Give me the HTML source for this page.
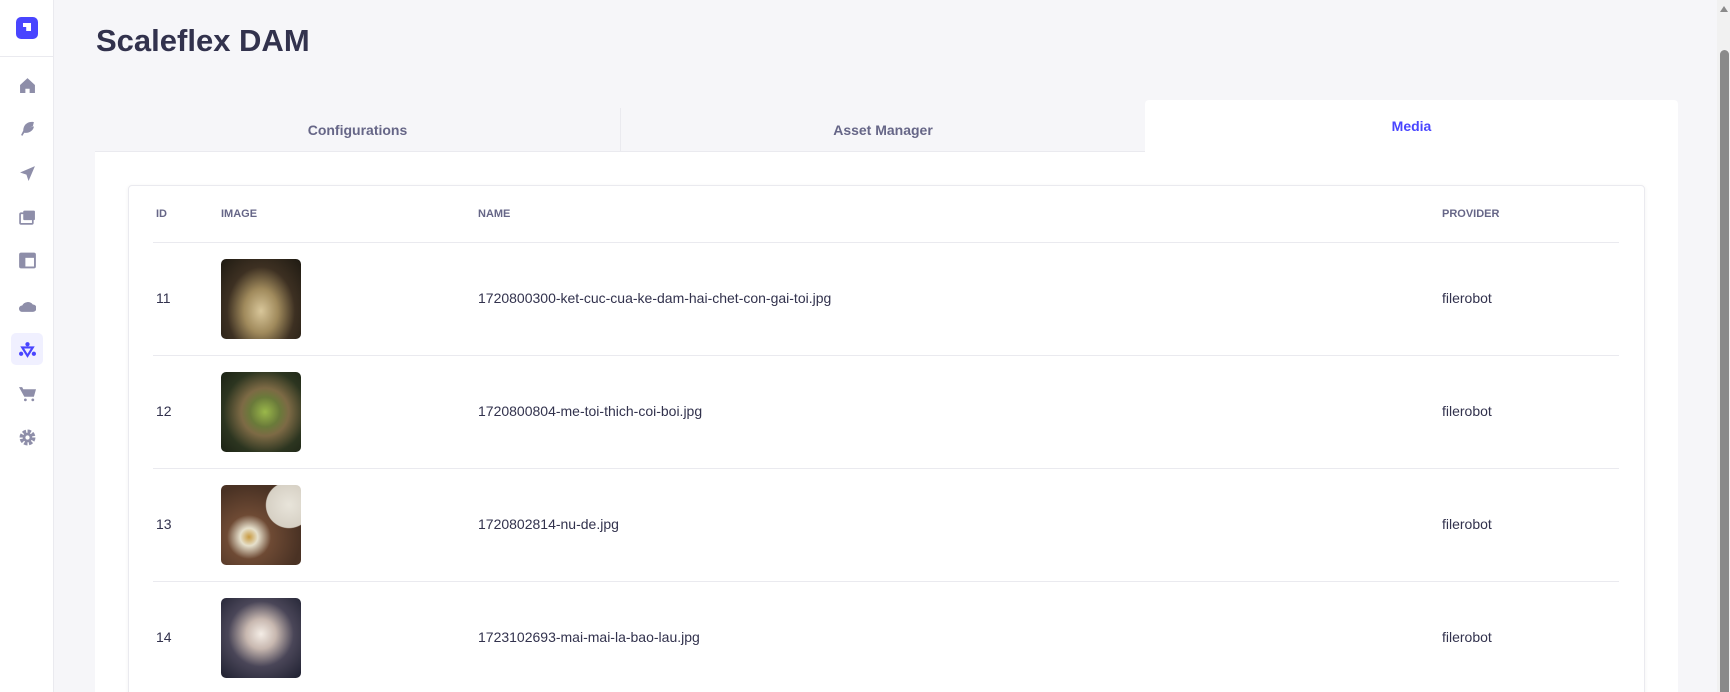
<!DOCTYPE html>
<html><head><meta charset="utf-8">
<style>
*{box-sizing:border-box;margin:0;padding:0}
html,body{width:1730px;height:692px;overflow:hidden;background:#f6f6f9;font-family:"Liberation Sans",sans-serif;color:#32324d}
#wrap{position:relative;width:1730px;height:692px;overflow:hidden}
.side{position:absolute;left:0;top:0;width:54px;height:692px;background:#fff;border-right:1px solid #eaeaef}
.logo{position:absolute;left:16px;top:17px;width:22px;height:22px;border-radius:5px;background:#4945ff}
.logo:after{content:"";position:absolute;left:7px;top:6px;width:8px;height:8px;background:#fff;clip-path:polygon(0 0,100% 0,100% 100%,40% 100%,40% 50%,0 50%)}
.sep{position:absolute;left:0;top:56px;width:54px;height:1px;background:#eaeaef}
.ic{position:absolute;left:19px;width:17px;height:17px}
.act{position:absolute;left:11px;top:333px;width:32px;height:32px;border-radius:5px;background:#f0f0ff}
h1{position:absolute;left:96px;top:23px;font-size:31px;font-weight:bold;color:#32324d}
.tabs{position:absolute;left:95px;top:108px;width:1050px;height:44px;border-bottom:1px solid #eaeaef}
.tab{position:absolute;top:0;height:44px;line-height:44px;text-align:center;font-size:14px;font-weight:bold;color:#666687}
.div{position:absolute;left:525px;top:0;width:1px;height:44px;background:#eaeaef}
.media{position:absolute;left:1145px;top:100px;width:533px;height:56px;background:#fff;border-radius:4px 4px 0 0;text-align:center;line-height:52px;font-size:14px;font-weight:bold;color:#4945ff}
.panel{position:absolute;left:95px;top:152px;width:1583px;height:540px;background:#fff}
.card{position:absolute;left:128px;top:185px;width:1517px;height:530px;background:#fff;border:1px solid #eaeaef;border-radius:4px;box-shadow:0 1px 4px rgba(33,33,52,.06)}
.th{position:absolute;top:208px;font-size:11px;font-weight:bold;color:#666687}
.line{position:absolute;left:153px;width:1466px;height:1px;background:#eaeaef}
.td{position:absolute;font-size:14px;color:#32324d}
.img{position:absolute;left:221px;width:80px;height:80px;border-radius:5px}
.sb{position:absolute;left:1717px;top:0;width:13px;height:692px;background:#f1f1f1}
.thumb{position:absolute;left:1720px;top:50px;width:9px;height:642px;background:#8a8a8a;border-radius:5px 5px 0 0}
.arr{position:absolute;left:1720px;top:6px;width:0;height:0;border-left:4.5px solid transparent;border-right:4.5px solid transparent;border-bottom:6px solid #8a8a8a}
</style></head><body><div id="wrap">
<div class="side">
<div class="logo"></div><div class="sep"></div>
<svg class="ic" style="top:77px" viewBox="0 0 16 16"><path d="M8 1L1 7.5V15h5v-4h4v4h5V7.5z" fill="#8e8ea9"/></svg>
<svg class="ic" style="top:120px" viewBox="0 0 16 16"><path d="M14 2c-5-1-10 2-10 8l-2 4 1 1 2-3c5 1 9-3 9-6L10 7l3-1z" fill="#8e8ea9"/></svg>
<svg class="ic" style="top:165px" viewBox="0 0 16 16"><path d="M15 1L1 7l6 2 2 6z" fill="#8e8ea9"/></svg>
<svg class="ic" style="top:209px" viewBox="0 0 16 16"><rect x="1" y="4" width="12" height="10" rx="1" fill="none" stroke="#8e8ea9" stroke-width="1.6"/><rect x="4" y="1.5" width="11" height="9" rx="1" fill="#8e8ea9"/></svg>
<svg class="ic" style="top:252px" viewBox="0 0 16 16"><rect x="1" y="1.5" width="14" height="13" rx="1" fill="none" stroke="#8e8ea9" stroke-width="1.8"/><rect x="1" y="1.5" width="14" height="4" fill="#8e8ea9"/><rect x="1" y="5" width="5" height="9" fill="#8e8ea9"/></svg>
<svg class="ic" style="top:297px" viewBox="0 0 16 16"><path d="M3 14a3 3 0 0 1 0-6 6 6 0 0 1 10-1 3.5 3.5 0 0 1 0 7z" fill="#8e8ea9"/></svg>
<div class="act"></div>
<svg class="ic" style="top:341px" viewBox="0 0 16 16"><path d="M3 6h10l-5 8z" fill="none" stroke="#4945ff" stroke-width="2"/><circle cx="8" cy="3" r="2" fill="#4945ff"/><circle cx="2" cy="12" r="2" fill="#4945ff"/><circle cx="14" cy="12" r="2" fill="#4945ff"/></svg>
<svg class="ic" style="top:385px" viewBox="0 0 16 16"><path d="M0 2h3l1 2h12l-2 7H5z" fill="#8e8ea9"/><circle cx="6" cy="14" r="1.3" fill="#8e8ea9"/><circle cx="13" cy="14" r="1.3" fill="#8e8ea9"/></svg>
<svg class="ic" style="top:429px" viewBox="0 0 16 16"><circle cx="8" cy="8" r="5.5" fill="none" stroke="#8e8ea9" stroke-width="4" stroke-dasharray="3 1.3"/><circle cx="8" cy="8" r="4.5" fill="#8e8ea9"/><circle cx="8" cy="8" r="2" fill="#fff"/></svg>
</div>
<h1>Scaleflex DAM</h1>
<div class="tabs">
<div class="tab" style="left:0;width:525px">Configurations</div>
<div class="div"></div>
<div class="tab" style="left:526px;width:524px">Asset Manager</div>
</div>
<div class="panel"></div>
<div class="media">Media</div>
<div class="card"></div>
<div class="th" style="left:156px">ID</div>
<div class="th" style="left:221px">IMAGE</div>
<div class="th" style="left:478px">NAME</div>
<div class="th" style="left:1442px">PROVIDER</div>
<div class="line" style="top:242px"></div>
<div class="line" style="top:355px"></div>
<div class="line" style="top:468px"></div>
<div class="line" style="top:581px"></div>

<div class="td" style="left:156px;top:290px">11</div>
<div class="img" style="top:259px;background:radial-gradient(ellipse at 50% 65%,#d8c69a 0,#a08a5c 30%,#3d3022 60%,#1e1a12 100%)"></div>
<div class="td" style="left:478px;top:290px">1720800300-ket-cuc-cua-ke-dam-hai-chet-con-gai-toi.jpg</div>
<div class="td" style="left:1442px;top:290px">filerobot</div>

<div class="td" style="left:156px;top:403px">12</div>
<div class="img" style="top:372px;background:radial-gradient(circle at 55% 50%,#9ab84a 0,#6a7a3a 25%,#7d6a45 40%,#2c3520 70%,#1b2214 100%)"></div>
<div class="td" style="left:478px;top:403px">1720800804-me-toi-thich-coi-boi.jpg</div>
<div class="td" style="left:1442px;top:403px">filerobot</div>

<div class="td" style="left:156px;top:516px">13</div>
<div class="img" style="top:485px;background:radial-gradient(circle at 85% 25%,#e8e4da 0,#d6d0c4 25%,transparent 26%),radial-gradient(circle at 35% 65%,#c89a40 0,#e6e0cc 12%,#6e4a34 30%,#4a3224 70%)"></div>
<div class="td" style="left:478px;top:516px">1720802814-nu-de.jpg</div>
<div class="td" style="left:1442px;top:516px">filerobot</div>

<div class="td" style="left:156px;top:629px">14</div>
<div class="img" style="top:598px;background:radial-gradient(circle at 50% 45%,#f4ede6 0,#c8b8b0 25%,#4a4658 55%,#1e2030 100%)"></div>
<div class="td" style="left:478px;top:629px">1723102693-mai-mai-la-bao-lau.jpg</div>
<div class="td" style="left:1442px;top:629px">filerobot</div>

<div class="sb"></div><div class="arr"></div><div class="thumb"></div>
</div></body></html>
